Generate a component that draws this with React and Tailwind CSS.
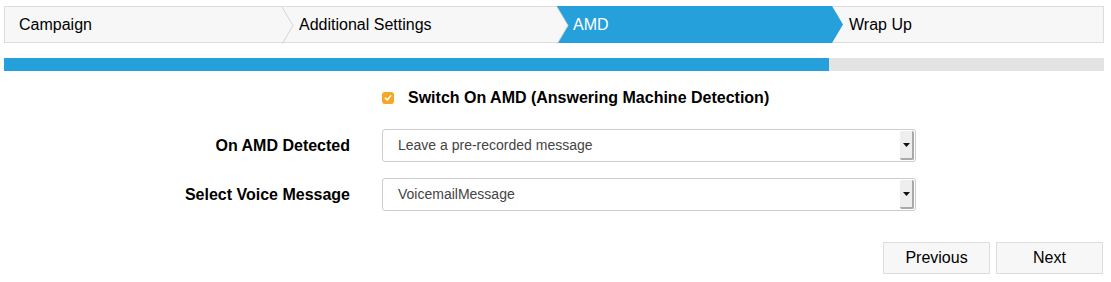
import React from "react";

const font = { fontFamily: '"Liberation Sans", Arial, Helvetica, sans-serif' };

function Chevron({ fill, stroke }) {
  return (
    <svg
      className="absolute top-0 left-full z-10"
      width="12"
      height="37"
      viewBox="0 0 12 37"
    >
      <polygon points="0,0 11,18.5 0,37" fill={fill} />
      {stroke && (
        <polyline points="0,0 11,18.5 0,37" fill="none" stroke={stroke} strokeWidth="1" />
      )}
    </svg>
  );
}

function Select({ value }) {
  return (
    <div className="flex h-[33px] w-[534px] items-stretch rounded-[3px] border border-[#cccccc] bg-white">
      <div className="flex flex-1 items-center pl-[15px] text-[14px] text-[#444]">{value}</div>
      <div className="my-[1px] mr-[1px] flex w-[14px] items-center justify-center rounded-[2px] border-r-2 border-b-2 border-[#a9a9a9] bg-[#eeeeee]">
        <svg width="7" height="4" viewBox="0 0 7 4">
          <polygon points="0,0 7,0 3.5,4" fill="#111" />
        </svg>
      </div>
    </div>
  );
}

export default function App() {
  return (
    <div className="h-[282px] w-[1111px] bg-white text-black" style={font}>
      <div className="ml-[4px] w-[1100px] pt-[6px]">
        {/* steps */}
        <div className="flex h-[37px] text-[16px]">
          <div className="relative flex w-[278px] items-center border-y border-l border-[#dddddd] bg-[#f7f7f7] pl-[14px]">
            Campaign
            <Chevron fill="#f7f7f7" stroke="#d4d4d4" />
          </div>
          <div className="relative flex w-[275px] items-center border-y border-[#dddddd] bg-[#f7f7f7] pl-[17px]">
            Additional Settings
            <Chevron fill="#f7f7f7" stroke="#d4d4d4" />
          </div>
          <div className="relative flex w-[275px] items-center bg-[#26a0da] pl-[16px] text-white">
            AMD
            <Chevron fill="#26a0da" />
          </div>
          <div className="flex flex-1 items-center border-y border-r border-[#dddddd] bg-[#f7f7f7] pl-[17px]">
            Wrap Up
          </div>
        </div>

        {/* progress */}
        <div className="mt-[15px] flex h-[13px] bg-[#e3e3e3]">
          <div className="h-full w-[825px] bg-[#26a0da]" />
        </div>

        {/* checkbox */}
        <div className="mt-[15px] flex items-center">
          <div className="ml-[378px] flex h-[12px] w-[12px] items-center justify-center rounded-[3px] bg-[#f5a623]">
            <svg width="8" height="8" viewBox="0 0 8 8">
              <polyline points="1.3,4.2 3.2,6 6.7,1.8" fill="none" stroke="white" strokeWidth="1.6" strokeLinecap="round" strokeLinejoin="round" />
            </svg>
          </div>
          <span className="ml-[14px] text-[16px] font-bold">Switch On AMD (Answering Machine Detection)</span>
        </div>

        {/* form */}
        <div className="mt-[19px] flex flex-col gap-[16px]">
          <div className="flex items-center gap-[32px]">
            <div className="w-[346px] text-right text-[16px] font-bold">On AMD Detected</div>
            <Select value="Leave a pre-recorded message" />
          </div>
          <div className="flex items-center gap-[32px]">
            <div className="w-[346px] text-right text-[16px] font-bold">Select Voice Message</div>
            <Select value="VoicemailMessage" />
          </div>
        </div>

        {/* buttons */}
        <div className="mt-[31px] flex justify-end gap-[6px] pr-[1px]">
          <button className="h-[32px] w-[107px] border border-[#dddddd] bg-[#f7f7f7] text-[16px]">Previous</button>
          <button className="h-[32px] w-[107px] border border-[#dddddd] bg-[#f7f7f7] text-[16px]">Next</button>
        </div>
      </div>
    </div>
  );
}
